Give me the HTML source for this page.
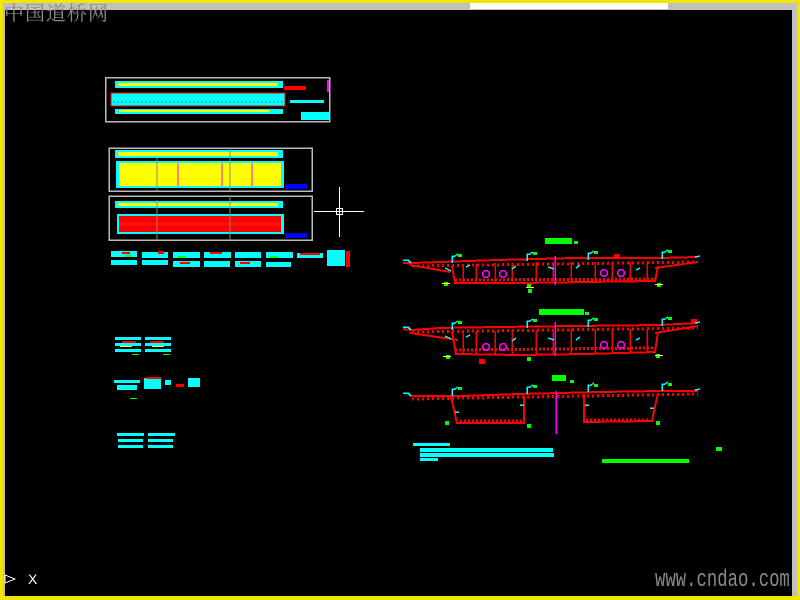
<!DOCTYPE html>
<html><head><meta charset="utf-8"><style>
html,body{margin:0;padding:0;width:800px;height:600px;overflow:hidden;background:#000;}
.a{position:absolute}
</style></head><body>
<div class="a" style="left:0;top:0;width:800px;height:600px;background:#f2e600"></div>
<div class="a" style="left:3px;top:3px;width:794px;height:593px;background:#c0c0c0"></div>
<div class="a" style="left:5px;top:10px;width:787px;height:586px;background:#000"></div>
<div class="a" style="left:470px;top:3px;width:198px;height:6px;background:#fff"></div>
<div class="a" style="left:4px;top:0px;font:20px 'Liberation Serif','Noto Serif CJK SC',serif;color:#8a8a8a;letter-spacing:1px;line-height:28px">中国道桥网</div>
<div class="a" style="left:655px;top:567px;font:24px 'Liberation Mono',monospace;color:#8a8a8a;transform:scaleX(0.72);transform-origin:left top;line-height:28px;white-space:nowrap">www.cndao.com</div>
<div class="a" style="left:28px;top:571px;font:14px 'Liberation Sans',sans-serif;color:#fff">X</div>
<svg class="a" style="left:0;top:0" width="800" height="600" viewBox="0 0 800 600" shape-rendering="crispEdges">
<polygon points="5,575 15,579 5,583" fill="none" stroke="#fff" stroke-width="1"/>
<!-- Frame 1 -->
<rect x="105.5" y="77.5" width="224" height="44" fill="none" stroke="#bbb" stroke-width="1.5"/>
<rect x="115" y="81" width="168" height="7" fill="#0ff"/>
<rect x="118" y="83" width="160" height="3" fill="#ff0"/>
<rect x="111" y="93" width="174" height="13" fill="#0ff" stroke="#f00" stroke-width="1"/>
<line x1="113" y1="98" x2="283" y2="98" stroke="#fff" stroke-dasharray="1 3"/>
<line x1="113" y1="102" x2="283" y2="102" stroke="#00a0a0" stroke-dasharray="2 2"/>
<rect x="115" y="109" width="168" height="5" fill="#0ff"/>
<rect x="119" y="110" width="150" height="2" fill="#ff0"/>
<rect x="284" y="86" width="22" height="4" fill="#f00"/>
<rect x="290" y="100" width="34" height="3" fill="#0ff"/>
<rect x="301" y="112" width="28" height="8" fill="#0ff"/>
<rect x="327" y="80" width="2" height="12" fill="#f0f"/>
<!-- Frame 2 -->
<rect x="109" y="148" width="203" height="43" fill="none" stroke="#bbb" stroke-width="1.5"/>
<rect x="115" y="150" width="168" height="8" fill="#0ff"/>
<rect x="118" y="152" width="160" height="4" fill="#ff0"/>
<rect x="116" y="161" width="168" height="27" fill="#0ff"/>
<rect x="119" y="163" width="162" height="23" fill="#ff0"/>
<line x1="178" y1="163" x2="178" y2="186" stroke="#f0f"/>
<line x1="222" y1="163" x2="222" y2="186" stroke="#f0f"/>
<line x1="252" y1="163" x2="252" y2="186" stroke="#f0f"/>
<line x1="157" y1="158" x2="157" y2="190" stroke="#888"/>
<line x1="230" y1="148" x2="230" y2="191" stroke="#888"/>
<rect x="285" y="184" width="22" height="5" fill="#00f"/>
<!-- Frame 3 -->
<rect x="109" y="196" width="203" height="44" fill="none" stroke="#bbb" stroke-width="1.5"/>
<rect x="115" y="201" width="168" height="7" fill="#0ff"/>
<rect x="118" y="203" width="160" height="3" fill="#ff0"/>
<rect x="117" y="214" width="167" height="20" fill="#0ff"/>
<rect x="119" y="216" width="162" height="16" fill="#f00"/>
<line x1="119" y1="224" x2="281" y2="224" stroke="#f0f" stroke-width="3" stroke-dasharray="1 1"/>
<line x1="157" y1="200" x2="157" y2="240" stroke="#888"/>
<line x1="230" y1="196" x2="230" y2="240" stroke="#888"/>
<rect x="285" y="233" width="22" height="5" fill="#00f"/>
<!-- small row -->
<g fill="#0ff">
<rect x="111" y="251" width="26" height="6"/><rect x="111" y="260" width="26" height="5"/>
<rect x="142" y="252" width="26" height="6"/><rect x="142" y="260" width="26" height="5"/>
<rect x="173" y="252" width="27" height="6"/><rect x="173" y="261" width="27" height="6"/>
<rect x="204" y="252" width="27" height="6"/><rect x="204" y="261" width="26" height="6"/>
<rect x="235" y="252" width="26" height="6"/><rect x="235" y="261" width="26" height="6"/>
<rect x="266" y="252" width="27" height="6"/><rect x="266" y="262" width="25" height="5"/>
<rect x="297" y="253" width="26" height="5"/>
<rect x="327" y="250" width="18" height="16"/>
</g>
<g fill="#f00"><rect x="122" y="252" width="8" height="2"/><rect x="158" y="251" width="6" height="3"/><rect x="210" y="252" width="12" height="2"/><rect x="346" y="251" width="4" height="16"/><rect x="300" y="253" width="20" height="2"/><rect x="180" y="262" width="10" height="2"/><rect x="240" y="262" width="10" height="2"/></g>
<g fill="#0f0"><rect x="125" y="255" width="6" height="2"/><rect x="178" y="256" width="8" height="2"/><rect x="270" y="256" width="8" height="2"/></g>
<!-- crosshair -->
<line x1="314" y1="211.5" x2="364" y2="211.5" stroke="#fff"/>
<line x1="339.5" y1="187" x2="339.5" y2="237" stroke="#fff"/>
<rect x="336.5" y="208.5" width="6" height="6" fill="none" stroke="#fff"/>
<!-- small groups left -->
<g fill="#0ff"><rect x="115" y="337" width="26" height="3"/><rect x="115" y="343" width="26" height="3"/><rect x="115" y="349" width="26" height="3"/>
<rect x="145" y="337" width="26" height="3"/><rect x="145" y="343" width="26" height="3"/><rect x="145" y="349" width="26" height="3"/>
<rect x="114" y="380" width="26" height="3"/><rect x="117" y="385" width="20" height="5"/><rect x="144" y="378" width="17" height="11"/><rect x="165" y="380" width="6" height="5"/><rect x="188" y="378" width="12" height="9"/>
<rect x="117" y="433" width="27" height="3"/><rect x="118" y="439" width="25" height="3"/><rect x="118" y="445" width="25" height="3"/>
<rect x="148" y="433" width="27" height="3"/><rect x="148" y="439" width="25" height="3"/><rect x="148" y="445" width="25" height="3"/></g>
<g fill="#f00"><rect x="122" y="341" width="14" height="2"/><rect x="150" y="341" width="14" height="2"/><rect x="146" y="377" width="15" height="2"/><rect x="176" y="384" width="8" height="3"/></g>
<g fill="#ff0"><rect x="120" y="346" width="12" height="1"/><rect x="152" y="346" width="12" height="1"/></g>
<g fill="#0f0"><rect x="132" y="354" width="7" height="1"/><rect x="163" y="354" width="7" height="1"/><rect x="130" y="398" width="7" height="1"/></g>
<!-- Right sections -->
<g stroke="#f00" fill="none" stroke-width="2">
<!-- s1 -->
<polyline points="403,263 412,263 440,262 498,260 575,258 660,258 698,257"/>
<line x1="410" y1="265" x2="450" y2="272"/><line x1="655" y1="268" x2="698" y2="262"/>
<line x1="412" y1="266" x2="698" y2="262" stroke-dasharray="2 3" stroke-width="3"/>
<polyline points="452,266 455,283 520,283 585,282 655,281 658,266"/>
<line x1="455" y1="280" x2="655" y2="279" stroke-dasharray="2 2" stroke-width="3"/>
<g stroke-width="1.5"><line x1="463" y1="264" x2="463" y2="283"/><line x1="476" y1="264" x2="476" y2="283"/><line x1="495" y1="263" x2="495" y2="283"/><line x1="512" y1="263" x2="512" y2="283"/><line x1="536" y1="262" x2="536" y2="283"/><line x1="553" y1="262" x2="553" y2="283"/><line x1="571" y1="262" x2="571" y2="282"/><line x1="595" y1="262" x2="595" y2="282"/><line x1="612" y1="262" x2="612" y2="282"/><line x1="630" y1="262" x2="630" y2="281"/><line x1="647" y1="262" x2="647" y2="281"/></g>
<!-- s2 -->
<polyline points="403,329 412,330 440,328 498,327 575,326 660,325 698,323"/>
<line x1="410" y1="333" x2="458" y2="340"/><line x1="655" y1="333" x2="698" y2="326"/>
<line x1="412" y1="332" x2="698" y2="328" stroke-dasharray="2 3" stroke-width="3"/>
<polyline points="452,332 456,354 520,355 585,354 655,352 658,332"/>
<line x1="455" y1="350" x2="655" y2="348" stroke-dasharray="2 2" stroke-width="3"/>
<g stroke-width="1.5"><line x1="463" y1="331" x2="463" y2="354"/><line x1="476" y1="331" x2="476" y2="354"/><line x1="495" y1="331" x2="495" y2="354"/><line x1="512" y1="330" x2="512" y2="354"/><line x1="536" y1="330" x2="536" y2="354"/><line x1="553" y1="330" x2="553" y2="354"/><line x1="571" y1="329" x2="571" y2="354"/><line x1="595" y1="329" x2="595" y2="353"/><line x1="612" y1="329" x2="612" y2="353"/><line x1="630" y1="329" x2="630" y2="352"/><line x1="647" y1="329" x2="647" y2="352"/></g>
<!-- s3 -->
<polyline points="410,396 460,396 520,394 600,392 660,391 698,391"/>
<line x1="412" y1="399" x2="698" y2="394" stroke-dasharray="2 3" stroke-width="3"/>
<polyline points="451,397 457,423 524,423 524,396"/>
<polyline points="584,394 584,422 652,421 658,393"/>
<line x1="460" y1="421" x2="522" y2="421" stroke-dasharray="2 2" stroke-width="3"/><line x1="586" y1="420" x2="650" y2="420" stroke-dasharray="2 2" stroke-width="3"/>
</g>
<g stroke="#f0f" stroke-width="1.5" fill="none">
<line x1="555" y1="256" x2="555" y2="285"/><line x1="555" y1="322" x2="555" y2="356"/><line x1="556" y1="391" x2="556" y2="434"/>
<circle cx="486" cy="274" r="3.5"/><circle cx="503" cy="274" r="3.5"/><circle cx="604" cy="273" r="3.5"/><circle cx="621" cy="273" r="3.5"/>
<circle cx="486" cy="347" r="3.5"/><circle cx="503" cy="347" r="3.5"/><circle cx="604" cy="345" r="3.5"/><circle cx="621" cy="345" r="3.5"/>
</g>
<g fill="#f00"><rect x="614" y="254" width="6" height="5"/><rect x="691" y="319" width="6" height="5"/><rect x="479" y="359" width="6" height="5"/></g>
<g stroke="#0ff" fill="none" stroke-width="1.5">
<path d="M452,263 v-7 h3 M455,256 l3,-2"/><path d="M527,261 v-7 h3 M530,254 l3,-2"/><path d="M588,260 v-7 h3 M591,253 l3,-2"/><path d="M662,259 v-7 h3 M665,252 l3,-2"/>
<path d="M452,330 v-7 h3 M455,323 l3,-2"/><path d="M527,328 v-7 h3 M530,321 l3,-2"/><path d="M588,327 v-7 h3 M591,320 l3,-2"/><path d="M662,326 v-7 h3 M665,319 l3,-2"/>
<path d="M452,396 v-7 h3 M455,389 l3,-2"/><path d="M527,394 v-7 h3 M530,387 l3,-2"/><path d="M588,392 v-7 h3 M591,385 l3,-2"/><path d="M662,391 v-7 h3 M665,384 l3,-2"/>
<path d="M403,260 l5,0 l3,3"/><path d="M403,327 l5,0 l3,3"/><path d="M403,393 l5,0 l3,3"/>
<path d="M700,256 l-5,1"/><path d="M700,322 l-5,1"/><path d="M700,389 l-5,1"/>
<path d="M445,268 l6,3"/><path d="M470,265 l-4,2"/><path d="M516,266 l-4,3"/><path d="M548,267 l6,2"/><path d="M580,265 l-4,3"/><path d="M640,268 l-4,2"/>
<path d="M445,336 l6,3"/><path d="M470,335 l-4,2"/><path d="M516,338 l-4,3"/><path d="M548,338 l6,2"/><path d="M580,337 l-4,3"/><path d="M640,338 l-4,2"/>
<path d="M520,405 l4,0"/><path d="M585,405 l4,0"/><path d="M455,412 l4,0"/><path d="M650,408 l4,0"/>
</g>
<g fill="#0f0">
<rect x="545" y="238" width="27" height="6"/><rect x="574" y="241" width="4" height="3"/>
<rect x="539" y="309" width="45" height="6"/><rect x="585" y="312" width="4" height="3"/>
<rect x="552" y="375" width="14" height="6"/><rect x="570" y="380" width="4" height="3"/>
<rect x="458" y="254" width="4" height="3"/><rect x="533" y="252" width="4" height="3"/><rect x="594" y="251" width="4" height="3"/><rect x="668" y="250" width="4" height="3"/>
<rect x="458" y="321" width="4" height="3"/><rect x="533" y="319" width="4" height="3"/><rect x="594" y="318" width="4" height="3"/><rect x="668" y="317" width="4" height="3"/>
<rect x="458" y="387" width="4" height="3"/><rect x="533" y="385" width="4" height="3"/><rect x="594" y="384" width="4" height="3"/><rect x="668" y="383" width="4" height="3"/>
<rect x="444" y="282" width="4" height="4"/><rect x="527" y="284" width="4" height="4"/><rect x="657" y="283" width="4" height="4"/><rect x="528" y="289" width="4" height="4"/>
<rect x="446" y="355" width="4" height="4"/><rect x="527" y="357" width="4" height="4"/><rect x="656" y="354" width="4" height="4"/>
<rect x="445" y="421" width="4" height="4"/><rect x="527" y="424" width="4" height="4"/><rect x="656" y="421" width="4" height="4"/>
<rect x="602" y="459" width="87" height="4"/><rect x="716" y="447" width="6" height="4"/>
</g>
<g fill="#ff0"><rect x="442" y="283" width="8" height="1"/><rect x="526" y="287" width="8" height="1"/><rect x="655" y="284" width="8" height="1"/><rect x="443" y="356" width="8" height="1"/><rect x="655" y="355" width="8" height="1"/></g>
<g fill="#0ff"><rect x="413" y="443" width="37" height="3"/><rect x="420" y="448" width="133" height="4"/><rect x="420" y="453" width="134" height="4"/><rect x="420" y="458" width="18" height="3"/></g>
</svg>
</body></html>
